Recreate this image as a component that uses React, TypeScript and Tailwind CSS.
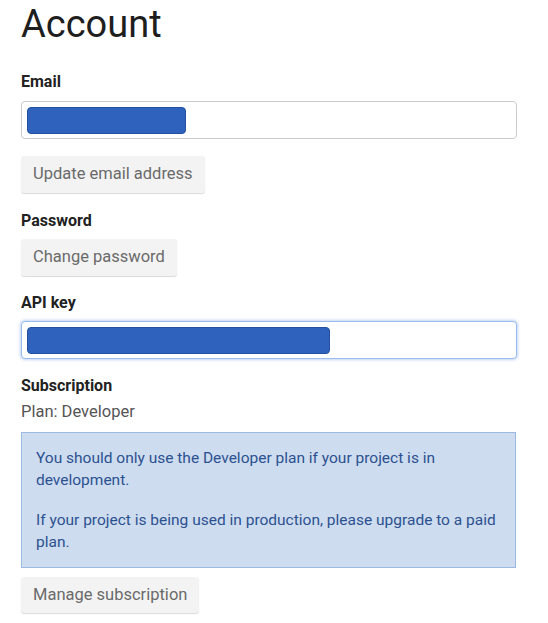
export default function App() {
  return (
    <main
      className="min-h-screen bg-white pl-[21px] pr-[31px] text-[#222]"
      style={{ fontFamily: "Roboto, 'Liberation Sans', sans-serif" }}
    >
      <h1 className="pt-[2px] text-[38px] font-normal leading-[44px] text-[#1e1e1e]">Account</h1>

      <h2 className="mt-[24px] text-[16px] font-bold leading-[24px]">Email</h2>
      <div className="mt-[7px] flex h-[38px] w-[496px] items-center rounded-[4px] border border-[#cccccc] bg-white px-[5px]">
        <div className="h-[27px] w-[159px] rounded-[4px] border border-[#24519f] bg-[#2f62bc]" />
      </div>
      <button
        type="button"
        className="mt-[17px] flex h-[37px] items-center rounded-[3px] bg-[#f3f3f3] px-[12px] text-[16.5px] text-[#6a6a6a] shadow-[0_1px_1px_rgba(0,0,0,0.15)]"
      >
        Update email address
      </button>

      <h2 className="mt-[16px] text-[16px] font-bold leading-[24px]">Password</h2>
      <button
        type="button"
        className="mt-[6px] flex h-[37px] items-center rounded-[3px] bg-[#f3f3f3] px-[12px] text-[16.5px] text-[#6a6a6a] shadow-[0_1px_1px_rgba(0,0,0,0.15)]"
      >
        Change password
      </button>

      <h2 className="mt-[15px] text-[16px] font-bold leading-[24px]">API key</h2>
      <div className="mt-[6px] flex h-[38px] w-[496px] items-center rounded-[4px] border border-[#9bbcf0] bg-white px-[5px] shadow-[0_0_3px_1px_rgba(120,160,230,0.45)]">
        <div className="h-[27px] w-[303px] rounded-[4px] border border-[#24519f] bg-[#2f62bc]" />
      </div>

      <h2 className="mt-[15px] text-[16px] font-bold leading-[24px]">Subscription</h2>
      <p className="mt-[2px] text-[16.5px] leading-[24px] text-[#555]">Plan: Developer</p>
      <div className="mt-[8px] w-[495px] border border-[#9db9e2] bg-[#cedcef] px-[14px] py-[14px] text-[15.5px] leading-[22px] text-[#2c5190]">
        <p>You should only use the Developer plan if your project is in development.</p>
        <p className="mt-[18px]">
          If your project is being used in production, please upgrade to a paid plan.
        </p>
      </div>
      <button
        type="button"
        className="mt-[9px] flex h-[36px] items-center rounded-[3px] bg-[#f3f3f3] px-[12px] text-[16.5px] text-[#6a6a6a] shadow-[0_1px_1px_rgba(0,0,0,0.15)]"
      >
        Manage subscription
      </button>
    </main>
  );
}
